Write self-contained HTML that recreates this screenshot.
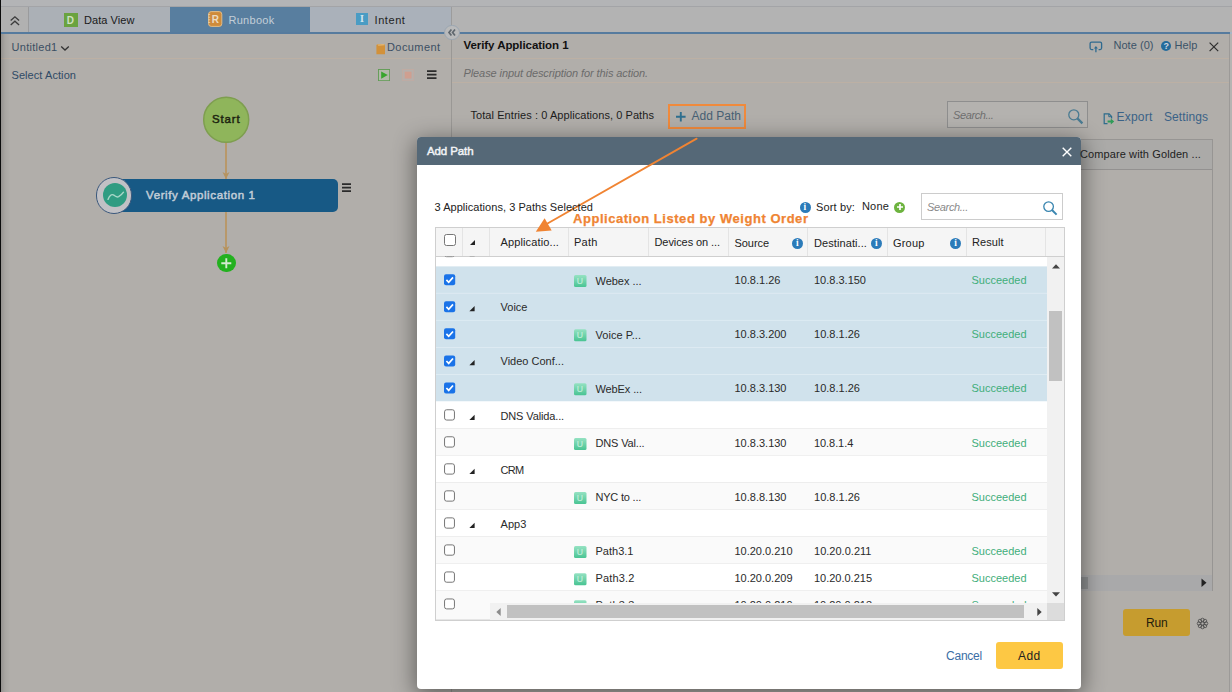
<!DOCTYPE html>
<html><head><meta charset="utf-8"><title>Add Path</title>
<style>
*{box-sizing:border-box;margin:0;padding:0}
html,body{width:1232px;height:692px;overflow:hidden}
body{position:relative;background:#b1aeaa;font-family:"Liberation Sans", sans-serif;font-size:11px;color:#222}
.a{position:absolute}
.t{position:absolute;white-space:pre;line-height:16px;height:16px}

.cb{position:absolute;width:12px;height:12px;border:1px solid #767676;border-radius:2.5px;background:#fff}
.cbc{position:absolute;width:12px;height:12px;border-radius:2.5px;background:#1a73e8}
.u{position:absolute;width:12.5px;height:12px;border-radius:1.5px;background:linear-gradient(#8fe0bd,#4cc595)}
.tri{position:absolute;width:0;height:0;border-left:5px solid transparent;border-bottom:5px solid #222}
.row{position:absolute;left:436px;width:611px;height:27px}

</style></head><body>
<div class="a" style="left:0px;top:0px;width:1232px;height:6px;background:#b3b4b6;"></div>
<div class="a" style="left:0px;top:6px;width:1232px;height:1px;background:#a3a4a7;"></div>
<div class="a" style="left:0px;top:7px;width:1232px;height:25px;background:#b3b3b3;"></div>
<div class="a" style="left:0px;top:7px;width:28px;height:25px;background:#b1b1b1;"></div>
<div class="a" style="left:28px;top:7px;width:1px;height:25px;background:#9a9b9d;"></div>
<div class="a" style="left:29px;top:7px;width:141px;height:25px;background:#abb0b6;"></div>
<div class="a" style="left:170px;top:7px;width:140px;height:25px;background:#587e9f;"></div>
<div class="a" style="left:310px;top:7px;width:141px;height:25px;background:#aab1ba;"></div>
<div class="a" style="left:451px;top:7px;width:1px;height:25px;background:#9c9c9c;"></div>
<div class="a" style="left:0px;top:32px;width:1230px;height:2px;background:#567b9e;"></div>
<div class="a" style="left:1229px;top:34px;width:1px;height:658px;background:#9c9a98;"></div>
<div class="a" style="left:1230px;top:7px;width:2px;height:685px;background:#b5b4b2;"></div>
<div class="a" style="left:1230px;top:32px;width:2px;height:2px;background:#a6b6c6;"></div>
<svg class="a" style="left:9px;top:15px;" width="12" height="12" viewBox="0 0 12 12"><path d="M1.7 5.6 L5.9 1.8 L10.1 5.6 M1.7 10 L5.9 6.2 L10.1 10" fill="none" stroke="#3c3c3c" stroke-width="1.3"/></svg>
<div class="a" style="left:64px;top:13px;width:14px;height:14px;background:#6aa33f;"></div>
<svg class="a" style="left:208px;top:11px;" width="15" height="16" viewBox="0 0 15 16"><rect x="0.6" y="0.6" width="13.2" height="14.8" rx="2.6" fill="#cf8b3a" stroke="#e3bd86" stroke-width="1"/><path d="M0 3.6H2.2M0 6.2H2.2M0 8.8H2.2M0 11.4H2.2" stroke="#e6cfa6" stroke-width="0.9"/></svg>
<div class="a" style="left:356px;top:13.4px;width:12px;height:11.8px;background:#4a9cc4;"></div>
<div class="t" style="left:360px;top:11.3px;font-family:'Liberation Serif',serif;font-weight:700;font-size:10px;color:#d6e6ee">I</div>
<div class="a" style="left:1px;top:58px;width:1228px;height:1px;background:#bcb0a4;"></div>
<svg class="a" style="left:60px;top:45px;" width="10" height="7" viewBox="0 0 10 7"><path d="M1.2 1.5 L5 5 L8.8 1.5" fill="none" stroke="#333" stroke-width="1.3"/></svg>
<svg class="a" style="left:376px;top:42.5px;" width="10" height="12" viewBox="0 0 10 12"><path d="M0.4 2.6Q0.4 1.4 1.6 1.3L7.2 0.9Q9 0.8 9 2.6V11.2H0.4Z" fill="#d2913a"/><path d="M1.4 1.5L7.2 1Q8.4 1 8.6 2.2L2.4 2.7Z" fill="#e0b777"/></svg>
<svg class="a" style="left:378px;top:68.6px;" width="12.4" height="12.4" viewBox="0 0 12.4 12.4"><rect x="0.5" y="0.5" width="11.2" height="11.2" fill="#b3b9aa" stroke="#5f9c53" stroke-width="0.9"/><path d="M3.2 2.5 L9.8 6.1 L3.2 9.7Z" fill="#38a52d"/></svg>
<svg class="a" style="left:402.3px;top:68.6px;" width="12.4" height="12.4" viewBox="0 0 12.4 12.4"><rect x="0.5" y="0.5" width="11.2" height="11.2" fill="#b6afab" stroke="#c0aaa2" stroke-width="0.9"/><rect x="2.7" y="2.7" width="6.8" height="6.8" fill="#cf9f90"/></svg>
<svg class="a" style="left:427px;top:70px;" width="10" height="10" viewBox="0 0 10 10"><path d="M0 1.2H9.5M0 4.7H9.5M0 8.2H9.5" stroke="#2b2b2b" stroke-width="1.7"/></svg>
<div class="a" style="left:225.3px;top:142px;width:1.5px;height:37px;background:#b8986a;"></div>
<div class="a" style="left:225.3px;top:211px;width:1.5px;height:42px;background:#b8986a;"></div>
<svg class="a" style="left:221px;top:171px;" width="10" height="9" viewBox="0 0 10 9"><path d="M1.5 1 L5 8 L8.5 1 L5 3Z" fill="#b6935f"/></svg>
<svg class="a" style="left:221px;top:245px;" width="10" height="9" viewBox="0 0 10 9"><path d="M1.5 1 L5 8 L8.5 1 L5 3Z" fill="#b6925b"/></svg>
<svg class="a" style="left:196px;top:90px;" width="60" height="60" viewBox="0 0 60 60"><circle cx="30.2" cy="29.8" r="22.5" fill="#8fb55b" stroke="#7e9e4f" stroke-width="1.5"/></svg>
<div class="a" style="left:112px;top:179px;width:225.5px;height:32.5px;background:#175985;border-radius:0 5px 5px 0"></div>
<div class="a" style="left:95.6px;top:176.8px;width:36.8px;height:36.8px;border-radius:50%;background:#c1c1c5;border:1.2px solid #3b587c"></div>
<div class="a" style="left:102.9px;top:183.3px;width:24.2px;height:24.2px;border-radius:50%;background:#2f9c82"></div>
<svg class="a" style="left:100px;top:185px;" width="30" height="20" viewBox="0 0 30 20"><path d="M8 14.4C9.3 10.8 11.4 8.9 13.3 9.9C15.2 10.9 16.6 12.7 18.6 11.7C20.6 10.6 22.3 8.9 23.5 7.2" fill="none" stroke="#a9d8c9" stroke-width="1.4" stroke-linecap="round"/></svg>
<svg class="a" style="left:342px;top:183px;" width="10" height="10" viewBox="0 0 10 10"><path d="M0 1.2H9M0 4.7H9M0 8.2H9" stroke="#2b2b2b" stroke-width="1.7"/></svg>
<div class="a" style="left:217px;top:253.7px;width:18.6px;height:18.6px;border-radius:50%;background:#23b11f"></div>
<svg class="a" style="left:220px;top:257px;" width="13" height="13" viewBox="0 0 13 13"><path d="M6.3 1.2V11.2M1.3 6.2H11.3" stroke="#d3ead0" stroke-width="1.9"/></svg>
<div class="a" style="left:451px;top:34px;width:1px;height:658px;background:#9a9895;"></div>
<div class="a" style="left:452px;top:82px;width:777px;height:1px;background:#bcb0a4;"></div>
<div class="a" style="left:444.3px;top:25px;width:15.4px;height:15.4px;border-radius:50%;background:#b9babb;border:1.5px solid #9aa6b2"></div>
<svg class="a" style="left:447px;top:28.2px;" width="10" height="9" viewBox="0 0 10 9"><path d="M4.4 1.5 L2 4.5 L4.4 7.5 M8 1.5 L5.6 4.5 L8 7.5" fill="none" stroke="#5f676e" stroke-width="1.7"/></svg>
<div class="a" style="left:668px;top:104px;width:78px;height:24.5px;border:2px solid #f08a3c"></div>
<svg class="a" style="left:676px;top:112px;" width="10" height="10" viewBox="0 0 10 10"><path d="M4.8 0V9.6M0 4.8H9.6" stroke="#2f6f8f" stroke-width="1.9"/></svg>
<svg class="a" style="left:1088.5px;top:40.5px;" width="14" height="12" viewBox="0 0 14 12"><path d="M4.3 8.6H2.6Q1.1 8.6 1.1 7.1V2.6Q1.1 1.1 2.6 1.1H11.1Q12.6 1.1 12.6 2.6V7.1Q12.6 8.6 11.1 8.6H9.6" fill="none" stroke="#2f6a8f" stroke-width="1.3"/><path d="M6.9 11.2V6.2" fill="none" stroke="#2f6a8f" stroke-width="1.3"/><path d="M4.9 7.4L6.9 4.9L8.9 7.4Z" fill="#2f6a8f"/></svg>
<div class="a" style="left:1161px;top:40.6px;width:10.4px;height:10.4px;border-radius:50%;background:#236b9b"></div>
<svg class="a" style="left:1209px;top:41.6px;" width="10" height="10" viewBox="0 0 10 10"><path d="M0.6 0.6L9.2 9.2M9.2 0.6L0.6 9.2" stroke="#2e2e2e" stroke-width="1.2"/></svg>
<div class="a" style="left:947px;top:101px;width:141px;height:26.5px;border:1px solid #8e8e8e;background:#b4b2af"></div>
<svg class="a" style="left:1067px;top:108px;" width="17" height="17" viewBox="0 0 17 17"><circle cx="6.8" cy="6.8" r="5" fill="none" stroke="#4a7b92" stroke-width="1.3"/><path d="M10.4 10.4L15.4 15.4" stroke="#4a7b92" stroke-width="2.3"/></svg>
<svg class="a" style="left:1102.5px;top:112.7px;" width="12" height="12" viewBox="0 0 12 12"><path d="M4.5 10.6H1.2V0.9H6.1L8.6 3.4V5.4" fill="none" stroke="#2d6c8c" stroke-width="1.2"/><path d="M5.8 1V3.7H8.5" fill="none" stroke="#2d6c8c" stroke-width="1"/><path d="M4.6 7.4H7.8V5.6L11.2 8.5L7.8 11.4V9.6H4.6Z" fill="#2f9b58"/></svg>
<div class="a" style="left:1000px;top:139px;width:213px;height:452px;border:1px solid #979593;background:#b1aeaa"></div>
<div class="a" style="left:1001px;top:140px;width:211px;height:29px;background:#abaaa8;"></div>
<div class="a" style="left:1001px;top:169px;width:211px;height:1px;background:#939190;"></div>
<div class="a" style="left:1001px;top:574.5px;width:211px;height:16px;background:#a9a9aa;"></div>
<div class="a" style="left:1001px;top:576.5px;width:87px;height:12px;background:#8f9192;"></div>
<svg class="a" style="left:1200px;top:578px;" width="8" height="10" viewBox="0 0 8 10"><path d="M1.5 0.5L6.5 4.7L1.5 9Z" fill="#222"/></svg>
<div class="a" style="left:1123px;top:609px;width:67px;height:27px;border-radius:3px;background:#c69c2f"></div>
<svg class="a" style="left:1196px;top:617px;" width="13" height="13" viewBox="0 0 13 13"><g fill="none" stroke="#4a4a4a" stroke-width="0.8"><circle cx="10.05" cy="6.50" r="1.75"/><circle cx="9.01" cy="9.01" r="1.75"/><circle cx="6.50" cy="10.05" r="1.75"/><circle cx="3.99" cy="9.01" r="1.75"/><circle cx="2.95" cy="6.50" r="1.75"/><circle cx="3.99" cy="3.99" r="1.75"/><circle cx="6.50" cy="2.95" r="1.75"/><circle cx="9.01" cy="3.99" r="1.75"/><circle cx="6.5" cy="6.5" r="1.7"/></g></svg>
<div class="a" style="left:417px;top:137px;width:664px;height:552px;border-radius:4px;background:#fff;box-shadow:0 5px 22px 2px rgba(0,0,0,0.45)"></div>
<div class="a" style="left:417px;top:137px;width:664px;height:28px;border-radius:4px 4px 0 0;background:#556877"></div>
<svg class="a" style="left:1062px;top:147px;" width="10" height="10" viewBox="0 0 10 10"><path d="M0.7 0.7L9.3 9.3M9.3 0.7L0.7 9.3" stroke="#fff" stroke-width="1.4"/></svg>
<div class="a" style="left:799.7px;top:201.7px;width:11.0px;height:11.0px;border-radius:50%;background:#2b7bb9"></div>
<div class="t" style="left:803.6px;top:199.0px;font-family:'Liberation Serif',serif;font-weight:700;font-size:9.5px;color:#fff">i</div>
<div class="a" style="left:894px;top:201.7px;width:11px;height:11px;border-radius:50%;background:#6db33f"></div>
<svg class="a" style="left:895.5px;top:203.2px;" width="8" height="8" viewBox="0 0 8 8"><path d="M4 1V7M1 4H7" stroke="#fff" stroke-width="1.7"/></svg>
<div class="a" style="left:921px;top:193px;width:142px;height:27px;border:1px solid #ccc;background:#fff"></div>
<svg class="a" style="left:1042px;top:200px;" width="17" height="17" viewBox="0 0 17 17"><circle cx="6.6" cy="6.6" r="4.8" fill="none" stroke="#3a86b0" stroke-width="1.3"/><path d="M10 10L14.6 14.6" stroke="#3a86b0" stroke-width="2"/></svg>
<div class="a" style="left:435px;top:227px;width:630px;height:393.5px;border:1px solid #cfcfcf;background:#fff"></div>
<div class="a" style="left:436px;top:228px;width:628px;height:28px;background:#f5f5f5;"></div>
<div class="a" style="left:436px;top:256px;width:628px;height:1px;background:#cfcfcf;"></div>
<div class="a" style="left:462px;top:228px;width:1px;height:28px;background:#e4e4e4;"></div>
<div class="a" style="left:489px;top:228px;width:1px;height:28px;background:#e4e4e4;"></div>
<div class="a" style="left:568px;top:228px;width:1px;height:28px;background:#e4e4e4;"></div>
<div class="a" style="left:648px;top:228px;width:1px;height:28px;background:#e4e4e4;"></div>
<div class="a" style="left:728px;top:228px;width:1px;height:28px;background:#e4e4e4;"></div>
<div class="a" style="left:807px;top:228px;width:1px;height:28px;background:#e4e4e4;"></div>
<div class="a" style="left:887px;top:228px;width:1px;height:28px;background:#e4e4e4;"></div>
<div class="a" style="left:966px;top:228px;width:1px;height:28px;background:#e4e4e4;"></div>
<div class="a" style="left:1045px;top:228px;width:1px;height:28px;background:#e4e4e4;"></div>
<div class="cb" style="left:444px;top:234px"></div>
<div class="tri" style="left:470px;top:240px"></div>
<div class="a" style="left:792.0px;top:237.5px;width:11.0px;height:11.0px;border-radius:50%;background:#2b7bb9"></div>
<div class="t" style="left:795.9px;top:234.8px;font-family:'Liberation Serif',serif;font-weight:700;font-size:9.5px;color:#fff">i</div>
<div class="a" style="left:871.0px;top:237.5px;width:11.0px;height:11.0px;border-radius:50%;background:#2b7bb9"></div>
<div class="t" style="left:874.9px;top:234.8px;font-family:'Liberation Serif',serif;font-weight:700;font-size:9.5px;color:#fff">i</div>
<div class="a" style="left:950.3px;top:237.5px;width:11.0px;height:11.0px;border-radius:50%;background:#2b7bb9"></div>
<div class="t" style="left:954.1999999999999px;top:234.8px;font-family:'Liberation Serif',serif;font-weight:700;font-size:9.5px;color:#fff">i</div>
<svg class="a" style="left:436px;top:256px;overflow:hidden" width="611" height="347" viewBox="0 0 611 347"><defs><linearGradient id="ug" x1="0" y1="0" x2="0" y2="1"><stop offset="0" stop-color="#95e2c2"/><stop offset="1" stop-color="#49c493"/></linearGradient></defs><rect x="8.55" y="-9.6" width="9.9" height="10.3" rx="2.1" fill="#fff" stroke="#8a8a8a" stroke-width="1"/><path d="M38.6 -4.6v5.2h-5.2z" fill="#999"/><rect x="0" y="10.40" width="611" height="27.13" fill="#d0e2ec"/><rect x="0" y="36.93" width="611" height="1" fill="#ebf3f8"/><rect x="8" y="18.30" width="11.2" height="11" rx="2" fill="#1a73e8"/><path d="M10.4 23.90l2.3 2.4l4.3-4.9" fill="none" stroke="#fff" stroke-width="1.7"/><rect x="138" y="19.10" width="12.5" height="12" rx="1.5" fill="url(#ug)"/><rect x="0" y="37.43" width="611" height="27.13" fill="#d0e2ec"/><rect x="0" y="63.96" width="611" height="1" fill="#ebf3f8"/><rect x="8" y="45.33" width="11.2" height="11" rx="2" fill="#1a73e8"/><path d="M10.4 50.93l2.3 2.4l4.3-4.9" fill="none" stroke="#fff" stroke-width="1.7"/><path d="M38.6 49.93v5.2h-5.2z" fill="#222"/><rect x="0" y="64.46" width="611" height="27.13" fill="#d0e2ec"/><rect x="0" y="90.99" width="611" height="1" fill="#ebf3f8"/><rect x="8" y="72.36" width="11.2" height="11" rx="2" fill="#1a73e8"/><path d="M10.4 77.96l2.3 2.4l4.3-4.9" fill="none" stroke="#fff" stroke-width="1.7"/><rect x="138" y="73.16" width="12.5" height="12" rx="1.5" fill="url(#ug)"/><rect x="0" y="91.49" width="611" height="27.13" fill="#d0e2ec"/><rect x="0" y="118.02" width="611" height="1" fill="#ebf3f8"/><rect x="8" y="99.39" width="11.2" height="11" rx="2" fill="#1a73e8"/><path d="M10.4 104.99l2.3 2.4l4.3-4.9" fill="none" stroke="#fff" stroke-width="1.7"/><path d="M38.6 103.99v5.2h-5.2z" fill="#222"/><rect x="0" y="118.52" width="611" height="27.13" fill="#d0e2ec"/><rect x="0" y="145.05" width="611" height="1" fill="#ebf3f8"/><rect x="8" y="126.42" width="11.2" height="11" rx="2" fill="#1a73e8"/><path d="M10.4 132.02l2.3 2.4l4.3-4.9" fill="none" stroke="#fff" stroke-width="1.7"/><rect x="138" y="127.22" width="12.5" height="12" rx="1.5" fill="url(#ug)"/><rect x="0" y="145.55" width="611" height="27.13" fill="#fff"/><rect x="0" y="172.08" width="611" height="1" fill="#e4e4e4"/><rect x="8.55" y="153.75" width="9.9" height="10.3" rx="2.1" fill="#fff" stroke="#767676" stroke-width="1"/><path d="M38.6 158.75v5.2h-5.2z" fill="#222"/><rect x="0" y="172.58" width="611" height="27.13" fill="#fafafa"/><rect x="0" y="199.11" width="611" height="1" fill="#e4e4e4"/><rect x="8.55" y="180.78" width="9.9" height="10.3" rx="2.1" fill="#fff" stroke="#767676" stroke-width="1"/><rect x="138" y="181.98" width="12.5" height="12" rx="1.5" fill="url(#ug)"/><rect x="0" y="199.61" width="611" height="27.13" fill="#fff"/><rect x="0" y="226.14" width="611" height="1" fill="#e4e4e4"/><rect x="8.55" y="207.81" width="9.9" height="10.3" rx="2.1" fill="#fff" stroke="#767676" stroke-width="1"/><path d="M38.6 212.81v5.2h-5.2z" fill="#222"/><rect x="0" y="226.64" width="611" height="27.13" fill="#fafafa"/><rect x="0" y="253.17" width="611" height="1" fill="#e4e4e4"/><rect x="8.55" y="234.84" width="9.9" height="10.3" rx="2.1" fill="#fff" stroke="#767676" stroke-width="1"/><rect x="138" y="236.04" width="12.5" height="12" rx="1.5" fill="url(#ug)"/><rect x="0" y="253.67" width="611" height="27.13" fill="#fff"/><rect x="0" y="280.20" width="611" height="1" fill="#e4e4e4"/><rect x="8.55" y="261.87" width="9.9" height="10.3" rx="2.1" fill="#fff" stroke="#767676" stroke-width="1"/><path d="M38.6 266.87v5.2h-5.2z" fill="#222"/><rect x="0" y="280.70" width="611" height="27.13" fill="#fafafa"/><rect x="0" y="307.23" width="611" height="1" fill="#e4e4e4"/><rect x="8.55" y="288.90" width="9.9" height="10.3" rx="2.1" fill="#fff" stroke="#767676" stroke-width="1"/><rect x="138" y="290.10" width="12.5" height="12" rx="1.5" fill="url(#ug)"/><rect x="0" y="307.73" width="611" height="27.13" fill="#fff"/><rect x="0" y="334.26" width="611" height="1" fill="#e4e4e4"/><rect x="8.55" y="315.93" width="9.9" height="10.3" rx="2.1" fill="#fff" stroke="#767676" stroke-width="1"/><rect x="138" y="317.13" width="12.5" height="12" rx="1.5" fill="url(#ug)"/><rect x="0" y="334.76" width="611" height="27.13" fill="#fafafa"/><rect x="0" y="361.29" width="611" height="1" fill="#e4e4e4"/><rect x="8.55" y="342.96" width="9.9" height="10.3" rx="2.1" fill="#fff" stroke="#767676" stroke-width="1"/><rect x="138" y="344.16" width="12.5" height="12" rx="1.5" fill="url(#ug)"/></svg>
<svg class="a" style="left:436px;top:603px;overflow:hidden;background:#fafafa" width="54" height="15.5" viewBox="0 0 54 15.5"><rect x="8.55" y="-4.4" width="9.9" height="10.3" rx="2.1" fill="#fff" stroke="#767676" stroke-width="1"/></svg>
<div class="a" style="left:1047px;top:257px;width:17px;height:346px;background:#f1f1f1;"></div>
<svg class="a" style="left:1051.5px;top:263.5px;" width="8" height="5" viewBox="0 0 8 5"><path d="M0 4.5L4 0.3L8 4.5Z" fill="#444"/></svg>
<svg class="a" style="left:1051.5px;top:591.5px;" width="8" height="5" viewBox="0 0 8 5"><path d="M0 0.3L4 4.5L8 0.3Z" fill="#444"/></svg>
<div class="a" style="left:1049px;top:311px;width:13px;height:70px;background:#c1c1c1;"></div>
<div class="a" style="left:490px;top:603px;width:557px;height:16.5px;background:#f1f1f1;z-index:3"></div>
<div class="a" style="left:1047px;top:603px;width:17px;height:16.5px;background:#dcdcdc;z-index:3"></div>
<div class="a" style="left:507px;top:605px;width:517px;height:12.5px;background:#c1c1c1;z-index:3"></div>
<svg class="a" style="left:495.5px;top:608px;z-index:4" width="5" height="8" viewBox="0 0 5 8"><path d="M4.7 0L0.3 4L4.7 8Z" fill="#8b8b8b"/></svg>
<svg class="a" style="left:1036.5px;top:608px;z-index:4" width="5" height="8" viewBox="0 0 5 8"><path d="M0.3 0L4.7 4L0.3 8Z" fill="#444"/></svg>
<div class="a" style="left:436px;top:618.5px;width:54px;height:1px;background:#e6e6e6;"></div>
<div class="a" style="left:996px;top:642px;width:67px;height:27px;border-radius:3px;background:#fdc844"></div>
<svg class="a" style="left:520px;top:130px;" width="190" height="110" viewBox="0 0 190 110"><path d="M176.6 8.7 L27.5 93.5" stroke="#f08433" stroke-width="1.9" fill="none" stroke-linecap="round"/><path d="M15.8 101.8 L24.6 88.2 L31.7 100.5Z" fill="#f08433"/></svg>
<div class="a" style="left:1px;top:34px;width:9px;height:658px;background:linear-gradient(90deg,rgba(0,0,0,0.16),rgba(0,0,0,0.05) 45%,rgba(0,0,0,0));"></div>
<div class="a" style="left:0px;top:0px;width:1px;height:692px;background:#0c0c0c;"></div>
<div class="t" style="left:66.80px;top:12.54px;font-size:10px;color:#cfe0c2;letter-spacing:0.000px;font-weight:700">D</div>
<div class="t" style="left:84.00px;top:12.19px;font-size:11px;color:#1a1a1a;letter-spacing:0.062px">Data View</div>
<div class="t" style="left:211.80px;top:11.84px;font-size:10px;color:#ecdcc2;letter-spacing:0.000px;font-weight:700">R</div>
<div class="t" style="left:228.50px;top:12.19px;font-size:11px;color:#c3ced8;letter-spacing:0.279px">Runbook</div>
<div class="t" style="left:374.50px;top:12.19px;font-size:11px;color:#1f1f1f;letter-spacing:0.578px">Intent</div>
<div class="t" style="left:11.50px;top:38.69px;font-size:11px;color:#3b4f63;letter-spacing:0.286px">Untitled1</div>
<div class="t" style="left:387.00px;top:38.69px;font-size:11px;color:#3b4f63;letter-spacing:0.420px">Document</div>
<div class="t" style="left:11.50px;top:67.19px;font-size:11px;color:#2f4a66;letter-spacing:0.070px">Select Action</div>
<div class="t" style="left:212.00px;top:110.62px;font-size:11.5px;color:#1c2410;letter-spacing:0.841px;-webkit-text-stroke:0.45px #1c2410">Start</div>
<div class="t" style="left:146.00px;top:187.02px;font-size:11.5px;color:#c1ccd7;letter-spacing:0.616px;-webkit-text-stroke:0.5px #c1ccd7">Verify Application 1</div>
<div class="t" style="left:463.50px;top:36.52px;font-size:11.5px;color:#111;letter-spacing:-0.065px;font-weight:700">Verify Application 1</div>
<div class="t" style="left:463.50px;top:64.89px;font-size:11px;color:#6b6b6b;letter-spacing:-0.093px;font-style:italic">Please input description for this action.</div>
<div class="t" style="left:470.50px;top:106.69px;font-size:11px;color:#1c1c1c;letter-spacing:0.064px">Total Entries : 0 Applications, 0 Paths</div>
<div class="t" style="left:691.50px;top:108.34px;font-size:12px;color:#475f73;letter-spacing:0.016px">Add Path</div>
<div class="t" style="left:1113.50px;top:37.19px;font-size:11px;color:#3c5368;letter-spacing:0.031px">Note (0)</div>
<div class="t" style="left:1163.50px;top:38.18px;font-size:9px;color:#cfd8e0;letter-spacing:0.000px;font-weight:700">?</div>
<div class="t" style="left:1174.50px;top:37.19px;font-size:11px;color:#3c5368;letter-spacing:0.094px">Help</div>
<div class="t" style="left:953.00px;top:106.69px;font-size:11px;color:#6e6e6e;letter-spacing:-0.392px;font-style:italic">Search...</div>
<div class="t" style="left:1116.50px;top:108.84px;font-size:12px;color:#3a6287;letter-spacing:0.219px">Export</div>
<div class="t" style="left:1164.00px;top:108.84px;font-size:12px;color:#3a6287;letter-spacing:0.080px">Settings</div>
<div class="t" style="left:1080.00px;top:145.69px;font-size:11px;color:#1e1e1e;letter-spacing:0.103px">Compare with Golden ...</div>
<div class="t" style="left:1146.00px;top:614.84px;font-size:12px;color:#241d0c;letter-spacing:-0.172px">Run</div>
<div class="t" style="left:427.00px;top:142.62px;font-size:11.5px;color:#f2f4f6;letter-spacing:-0.104px;-webkit-text-stroke:0.45px #f2f4f6">Add Path</div>
<div class="t" style="left:434.50px;top:199.19px;font-size:11px;color:#222;letter-spacing:0.042px">3 Applications, 3 Paths Selected</div>
<div class="t" style="left:816.00px;top:199.19px;font-size:11px;color:#222;letter-spacing:0.137px">Sort by:</div>
<div class="t" style="left:862.00px;top:198.19px;font-size:11px;color:#222;letter-spacing:0.176px">None</div>
<div class="t" style="left:927.00px;top:199.19px;font-size:11px;color:#8a8a8a;letter-spacing:-0.337px;font-style:italic">Search...</div>
<div class="t" style="left:500.50px;top:234.19px;font-size:11px;color:#222;letter-spacing:0.125px">Applicatio...</div>
<div class="t" style="left:574.00px;top:234.19px;font-size:11px;color:#222;letter-spacing:0.215px">Path</div>
<div class="t" style="left:654.50px;top:234.19px;font-size:11px;color:#222;letter-spacing:-0.081px">Devices on ...</div>
<div class="t" style="left:734.50px;top:235.19px;font-size:11px;color:#222;letter-spacing:-0.060px">Source</div>
<div class="t" style="left:814.00px;top:235.19px;font-size:11px;color:#222;letter-spacing:0.086px">Destinati...</div>
<div class="t" style="left:893.00px;top:235.19px;font-size:11px;color:#222;letter-spacing:0.184px">Group</div>
<div class="t" style="left:972.00px;top:234.19px;font-size:11px;color:#222;letter-spacing:0.052px">Result</div>
<div class="t" style="left:576.80px;top:272.92px;font-size:8.6px;color:#c3efdc;letter-spacing:0.000px;-webkit-text-stroke:0.15px #c3efdc">U</div>
<div class="t" style="left:595.50px;top:272.79px;font-size:11px;color:#2a2a2a;letter-spacing:-0.030px">Webex ...</div>
<div class="t" style="left:734.50px;top:272.19px;font-size:11px;color:#2a2a2a;letter-spacing:0.014px">10.8.1.26</div>
<div class="t" style="left:814.00px;top:272.19px;font-size:11px;color:#2a2a2a;letter-spacing:0.000px">10.8.3.150</div>
<div class="t" style="left:971.50px;top:272.19px;font-size:11px;color:#3fae7a;letter-spacing:-0.005px">Succeeded</div>
<div class="t" style="left:500.50px;top:299.22px;font-size:11px;color:#2a2a2a;letter-spacing:0.016px">Voice</div>
<div class="t" style="left:576.80px;top:326.98px;font-size:8.6px;color:#c3efdc;letter-spacing:0.000px;-webkit-text-stroke:0.15px #c3efdc">U</div>
<div class="t" style="left:595.50px;top:326.85px;font-size:11px;color:#2a2a2a;letter-spacing:0.044px">Voice P...</div>
<div class="t" style="left:734.50px;top:326.25px;font-size:11px;color:#2a2a2a;letter-spacing:0.000px">10.8.3.200</div>
<div class="t" style="left:814.00px;top:326.25px;font-size:11px;color:#2a2a2a;letter-spacing:0.014px">10.8.1.26</div>
<div class="t" style="left:971.50px;top:326.25px;font-size:11px;color:#3fae7a;letter-spacing:-0.005px">Succeeded</div>
<div class="t" style="left:500.50px;top:353.28px;font-size:11px;color:#2a2a2a;letter-spacing:0.007px">Video Conf...</div>
<div class="t" style="left:576.80px;top:381.04px;font-size:8.6px;color:#c3efdc;letter-spacing:0.000px;-webkit-text-stroke:0.15px #c3efdc">U</div>
<div class="t" style="left:595.50px;top:380.91px;font-size:11px;color:#2a2a2a;letter-spacing:-0.109px">WebEx ...</div>
<div class="t" style="left:734.50px;top:380.31px;font-size:11px;color:#2a2a2a;letter-spacing:0.000px">10.8.3.130</div>
<div class="t" style="left:814.00px;top:380.31px;font-size:11px;color:#2a2a2a;letter-spacing:0.014px">10.8.1.26</div>
<div class="t" style="left:971.50px;top:380.31px;font-size:11px;color:#3fae7a;letter-spacing:-0.005px">Succeeded</div>
<div class="t" style="left:500.50px;top:408.04px;font-size:11px;color:#2a2a2a;letter-spacing:-0.132px">DNS Valida...</div>
<div class="t" style="left:576.80px;top:435.80px;font-size:8.6px;color:#c3efdc;letter-spacing:0.000px;-webkit-text-stroke:0.15px #c3efdc">U</div>
<div class="t" style="left:595.50px;top:435.07px;font-size:11px;color:#2a2a2a;letter-spacing:-0.153px">DNS Val...</div>
<div class="t" style="left:734.50px;top:435.07px;font-size:11px;color:#2a2a2a;letter-spacing:0.000px">10.8.3.130</div>
<div class="t" style="left:814.00px;top:435.07px;font-size:11px;color:#2a2a2a;letter-spacing:-0.071px">10.8.1.4</div>
<div class="t" style="left:971.50px;top:435.07px;font-size:11px;color:#3fae7a;letter-spacing:-0.005px">Succeeded</div>
<div class="t" style="left:500.50px;top:462.10px;font-size:11px;color:#2a2a2a;letter-spacing:-0.688px">CRM</div>
<div class="t" style="left:576.80px;top:489.86px;font-size:8.6px;color:#c3efdc;letter-spacing:0.000px;-webkit-text-stroke:0.15px #c3efdc">U</div>
<div class="t" style="left:595.50px;top:489.13px;font-size:11px;color:#2a2a2a;letter-spacing:-0.209px">NYC to ...</div>
<div class="t" style="left:734.50px;top:489.13px;font-size:11px;color:#2a2a2a;letter-spacing:0.000px">10.8.8.130</div>
<div class="t" style="left:814.00px;top:489.13px;font-size:11px;color:#2a2a2a;letter-spacing:0.014px">10.8.1.26</div>
<div class="t" style="left:971.50px;top:489.13px;font-size:11px;color:#3fae7a;letter-spacing:-0.005px">Succeeded</div>
<div class="t" style="left:500.50px;top:516.16px;font-size:11px;color:#2a2a2a;letter-spacing:0.074px">App3</div>
<div class="t" style="left:576.80px;top:543.92px;font-size:8.6px;color:#c3efdc;letter-spacing:0.000px;-webkit-text-stroke:0.15px #c3efdc">U</div>
<div class="t" style="left:595.50px;top:543.19px;font-size:11px;color:#2a2a2a;letter-spacing:0.011px">Path3.1</div>
<div class="t" style="left:734.50px;top:543.19px;font-size:11px;color:#2a2a2a;letter-spacing:-0.011px">10.20.0.210</div>
<div class="t" style="left:814.00px;top:543.19px;font-size:11px;color:#2a2a2a;letter-spacing:0.018px">10.20.0.211</div>
<div class="t" style="left:971.50px;top:543.19px;font-size:11px;color:#3fae7a;letter-spacing:-0.005px">Succeeded</div>
<div class="t" style="left:576.80px;top:570.95px;font-size:8.6px;color:#c3efdc;letter-spacing:0.000px;-webkit-text-stroke:0.15px #c3efdc">U</div>
<div class="t" style="left:595.50px;top:570.22px;font-size:11px;color:#2a2a2a;letter-spacing:0.154px">Path3.2</div>
<div class="t" style="left:734.50px;top:570.22px;font-size:11px;color:#2a2a2a;letter-spacing:-0.011px">10.20.0.209</div>
<div class="t" style="left:814.00px;top:570.22px;font-size:11px;color:#2a2a2a;letter-spacing:-0.011px">10.20.0.215</div>
<div class="t" style="left:971.50px;top:570.22px;font-size:11px;color:#3fae7a;letter-spacing:-0.005px">Succeeded</div>
<div class="t" style="left:576.80px;top:597.98px;font-size:8.6px;color:#c3efdc;letter-spacing:0.000px;-webkit-text-stroke:0.15px #c3efdc">U</div>
<div class="t" style="left:595.50px;top:597.25px;font-size:11px;color:#2a2a2a;letter-spacing:0.154px">Path3.3</div>
<div class="t" style="left:734.50px;top:597.25px;font-size:11px;color:#2a2a2a;letter-spacing:-0.011px">10.20.0.210</div>
<div class="t" style="left:814.00px;top:597.25px;font-size:11px;color:#2a2a2a;letter-spacing:-0.011px">10.20.0.213</div>
<div class="t" style="left:971.50px;top:597.25px;font-size:11px;color:#3fae7a;letter-spacing:-0.005px">Succeeded</div>
<div class="t" style="left:946.00px;top:647.84px;font-size:12px;color:#3b6ea5;letter-spacing:-0.227px">Cancel</div>
<div class="t" style="left:1018.00px;top:647.84px;font-size:12px;color:#222;letter-spacing:0.380px">Add</div>
<div class="t" style="left:573.00px;top:211.20px;font-size:13px;color:#ef8433;letter-spacing:0.539px;font-weight:700;-webkit-text-stroke:0.25px #ef8433">Application Listed by Weight Order</div>
</body></html>
